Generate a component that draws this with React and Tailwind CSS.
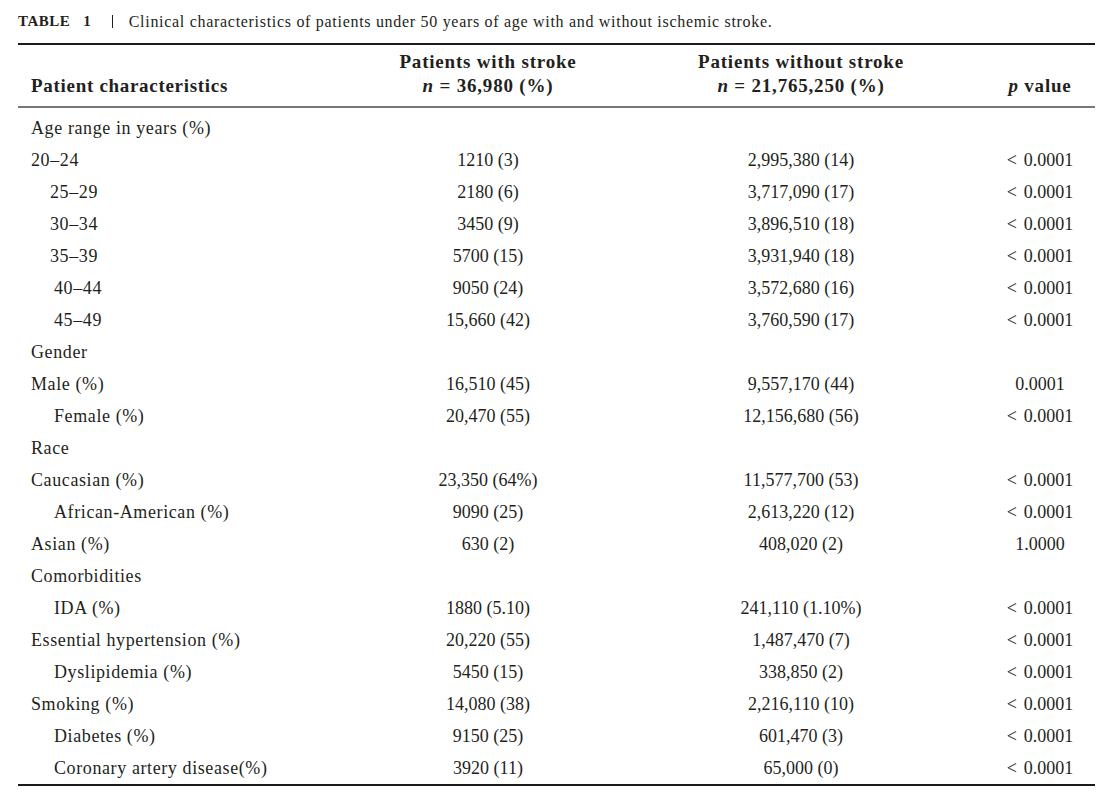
const rows = [
  { label: "Age range in years (%)", indent: 0 },
  { label: "20–24", indent: 0, a: "1210 (3)", b: "2,995,380 (14)", p: "< 0.0001" },
  { label: "25–29", indent: 1, a: "2180 (6)", b: "3,717,090 (17)", p: "< 0.0001" },
  { label: "30–34", indent: 1, a: "3450 (9)", b: "3,896,510 (18)", p: "< 0.0001" },
  { label: "35–39", indent: 1, a: "5700 (15)", b: "3,931,940 (18)", p: "< 0.0001" },
  { label: "40–44", indent: 2, a: "9050 (24)", b: "3,572,680 (16)", p: "< 0.0001" },
  { label: "45–49", indent: 2, a: "15,660 (42)", b: "3,760,590 (17)", p: "< 0.0001" },
  { label: "Gender", indent: 0 },
  { label: "Male (%)", indent: 0, a: "16,510 (45)", b: "9,557,170 (44)", p: "0.0001" },
  { label: "Female (%)", indent: 2, a: "20,470 (55)", b: "12,156,680 (56)", p: "< 0.0001" },
  { label: "Race", indent: 0 },
  { label: "Caucasian (%)", indent: 0, a: "23,350 (64%)", b: "11,577,700 (53)", p: "< 0.0001" },
  { label: "African-American (%)", indent: 2, a: "9090 (25)", b: "2,613,220 (12)", p: "< 0.0001" },
  { label: "Asian (%)", indent: 0, a: "630 (2)", b: "408,020 (2)", p: "1.0000" },
  { label: "Comorbidities", indent: 0 },
  { label: "IDA (%)", indent: 2, a: "1880 (5.10)", b: "241,110 (1.10%)", p: "< 0.0001" },
  { label: "Essential hypertension (%)", indent: 0, a: "20,220 (55)", b: "1,487,470 (7)", p: "< 0.0001" },
  { label: "Dyslipidemia (%)", indent: 2, a: "5450 (15)", b: "338,850 (2)", p: "< 0.0001" },
  { label: "Smoking (%)", indent: 0, a: "14,080 (38)", b: "2,216,110 (10)", p: "< 0.0001" },
  { label: "Diabetes (%)", indent: 2, a: "9150 (25)", b: "601,470 (3)", p: "< 0.0001" },
  { label: "Coronary artery disease(%)", indent: 2, a: "3920 (11)", b: "65,000 (0)", p: "< 0.0001" },
];

const indentClass = ["pl-[13px]", "pl-[32px]", "pl-[36px]"];

// "< 0.0001" gets a wider gap after the sign, as in the print
function PValue({ value }) {
  if (value.startsWith("<")) {
    return (
      <span>
        <span className="mr-[7px]">&lt;</span>
        {value.slice(2)}
      </span>
    );
  }
  return <span>{value}</span>;
}

function Row({ row }) {
  return (
    <div className="flex h-8 items-center text-[18px]">
      <div className={`w-[380px] tracking-[0.6px] ${indentClass[row.indent]}`}>{row.label}</div>
      <div className="w-[180px] text-center">{row.a}</div>
      <div className="ml-[102px] w-[242px] text-center">{row.b}</div>
      <div className="ml-[63px] w-[110px] text-center">{row.p && <PValue value={row.p} />}</div>
    </div>
  );
}

export default function App() {
  return (
    <div className="min-h-[795px] w-[1107px] bg-white font-['Liberation_Serif',serif] text-[#231f20]">
      <div className="pl-[18px] pr-[12px]">
        <div className="flex h-[43px] items-center">
          <span className="text-[15px] font-bold tracking-[0.5px]">TABLE</span>
          <span className="ml-[13px] text-[15px] font-bold">1</span>
          <span className="ml-[21px] mr-[16px] h-[13px] w-px bg-[#231f20]"></span>
          <span className="text-[16px] tracking-[0.7px]">
            Clinical characteristics of patients under 50 years of age with and without ischemic stroke.
          </span>
        </div>
        <div className="border-t-2 border-[#1a1a1a]">
          <div className="flex pb-[8px] pt-[5px] text-[19px] font-bold leading-6 tracking-[0.8px]">
            <div className="flex w-[380px] items-end pl-[13px] tracking-[0.7px]">Patient characteristics</div>
            <div className="w-[180px] text-center">
              <div>Patients with stroke</div>
              <div>
                <i>n</i> = 36,980 (%)
              </div>
            </div>
            <div className="ml-[102px] w-[242px] text-center">
              <div>Patients without stroke</div>
              <div>
                <i>n</i> = 21,765,250 (%)
              </div>
            </div>
            <div className="ml-[63px] flex w-[110px] items-end justify-center">
              <span>
                <i>p</i> value
              </span>
            </div>
          </div>
        </div>
        <div className="border-b-2 border-t-2 border-b-[#1a1a1a] border-t-[#777777] pt-[4px]">
          {rows.map((row, i) => (
            <Row key={i} row={row} />
          ))}
        </div>
      </div>
    </div>
  );
}
